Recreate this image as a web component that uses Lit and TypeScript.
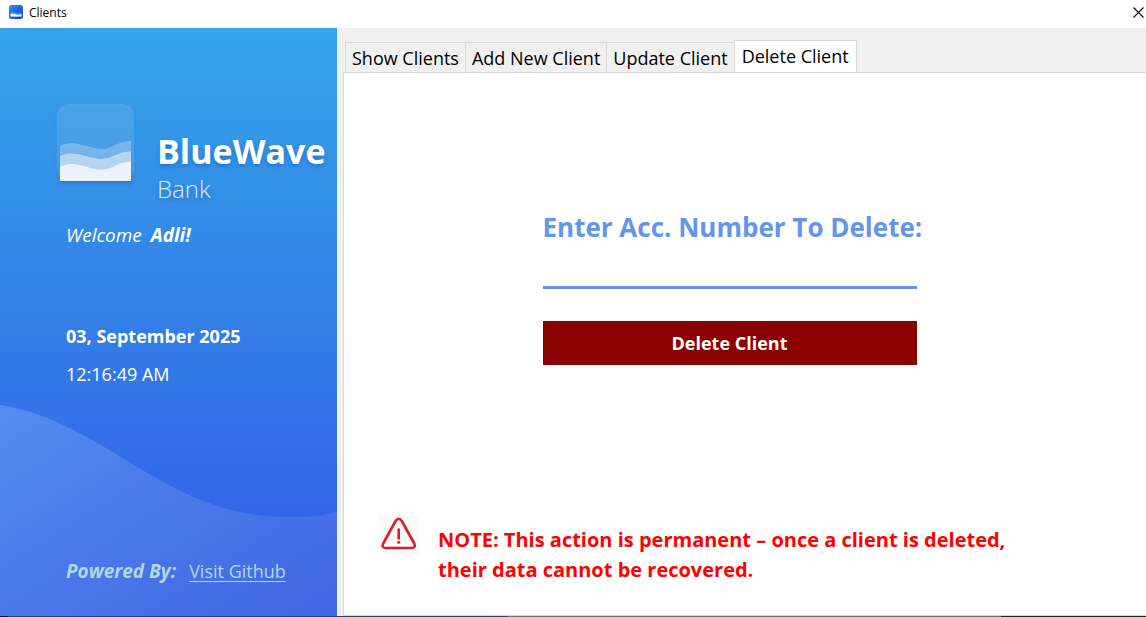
import { LitElement, html, css, svg } from "lit";
import { customElement, state } from "lit/decorators.js";

const waves = svg`
  <path d="M3 42.600 C7 39.500 11 39 14.700 39 C25 39 34 45 44.700 45 C55 45 61 37 74 37 V77 H3Z" fill="#fff" fill-opacity=".27"/>
  <path d="M3 52.300 C7 50 11 49.600 14.700 49.600 C25 49.600 34 55 44.700 55 C55 55 61 47.600 74 47.600 V77 H3Z" fill="#fff" fill-opacity=".48"/>
  <path d="M3 63 C7 60.500 11 60 14.700 60 C25 60 34 65.700 44.700 65.700 C55 65.700 61 57.800 74 57.800 V77 H3Z" fill="#ebf2fc"/>`;

@customElement("app-root")
export class AppRoot extends LitElement {
  @state() private tabs = ["Show Clients", "Add New Client", "Update Client", "Delete Client"];
  @state() private active = 3;

  static styles = css`
    :host {
      display: flex;
      flex-direction: column;
      min-height: 100vh;
      font-family: "Open Sans", "Noto Sans", sans-serif;
      color: #000;
      background: #fff;
    }
    * { box-sizing: border-box; }
    h1, h2, p { margin: 0; }
    .titlebar {
      display: flex;
      align-items: center;
      height: 28px;
      padding: 0 2px 4px 8px;
    }
    .app-icon { width: 16px; height: 16px; margin-right: 5px; }
    .title { font-size: 12px; line-height: 18px; padding-top: 2px; flex: 1; }
    .close {
      display: flex;
      padding: 0;
      border: 0;
      background: none;
    }
    .body { flex: 1; display: flex; }
    .sidebar {
      width: 337px;
      flex: none;
      display: grid;
      background: linear-gradient(#33a5e9, #3366e7 82%, #3366e7);
    }
    .wave {
      grid-area: 1 / 1;
      align-self: end;
      width: 100%;
      height: 211px;
      display: block;
    }
    .side-content {
      grid-area: 1 / 1;
      display: flex;
      flex-direction: column;
      padding: 76px 0 31px 57px;
      color: #fff;
      font-size: 18px;
      line-height: 28px;
    }
    .brand { display: flex; gap: 23px; }
    .logo { filter: drop-shadow(0 2px 2px rgba(0, 40, 120, 0.3)); flex: none; }
    .brand-text { padding-top: 25px; text-shadow: 0 2px 4px rgba(0, 40, 120, 0.3); }
    .brand-name { font-size: 34px; line-height: 44px; font-weight: 700; }
    .brand-sub { font-size: 24px; line-height: 32px; font-weight: 300; color: #dcebfb; }
    .info { display: flex; flex-direction: column; padding-left: 9px; }
    .welcome { font-style: italic; font-size: 19px; padding-top: 16px; }
    .welcome b { margin-left: 4px; }
    .date { font-weight: 700; padding-top: 73px; }
    .time { padding-top: 10px; }
    .powered {
      display: flex;
      gap: 13px;
      margin-top: auto;
      padding-left: 9px;
      color: #add8e6;
    }
    .powered strong { font-size: 19px; font-style: italic; }
    .powered a {
      color: inherit;
      text-decoration: underline;
      text-decoration-thickness: 1px;
      text-underline-offset: 3px;
    }
    .main {
      flex: 1;
      min-width: 0;
      display: flex;
      flex-direction: column;
      background: #f0f0f0;
      padding: 12px 0 0 6px;
    }
    .tabs {
      display: flex;
      align-items: flex-end;
      padding-left: 2px;
      margin-bottom: -1px;
    }
    .tab {
      font: inherit;
      font-size: 18px;
      line-height: 30px;
      height: 31px;
      padding: 0 6px;
      border: 1px solid #d9d9d9;
      border-right: 0;
      background: #f0f0f0;
      color: #000;
      white-space: nowrap;
    }
    .tab.active {
      height: 33px;
      padding: 0 7px 2px;
      border-right: 1px solid #d9d9d9;
      border-bottom-color: #fff;
      background: #fff;
    }
    .panel {
      flex: 1;
      display: flex;
      flex-direction: column;
      background: #fff;
      border: 1px solid #d9d9d9;
      border-right: 0;
      padding: 134px 66px 30px 35px;
    }
    .form {
      width: 374px;
      align-self: center;
      display: flex;
      flex-direction: column;
    }
    .form label {
      color: #6495ed;
      font-size: 26px;
      font-weight: 700;
      line-height: 40px;
      white-space: nowrap;
    }
    .form input {
      font: inherit;
      font-size: 20px;
      height: 42px;
      padding: 0;
      border: 0;
      border-bottom: 3px solid #6495ed;
      border-radius: 0;
      background: none;
      outline: 0;
    }
    .delete {
      font: inherit;
      font-size: 18px;
      font-weight: 700;
      height: 44px;
      margin-top: 32px;
      padding: 0;
      border: 0;
      background: #8b0000;
      color: #fff;
    }
    .note {
      display: flex;
      gap: 19px;
      margin-top: auto;
      color: #f00;
      font-size: 20px;
      font-weight: 700;
      line-height: 30px;
    }
    .warn { flex: none; }
    .note p { padding-top: 10px; }
    .edge {
      height: 1px;
      background: linear-gradient(90deg, #111 8px, #2f426b 8px 508px, #707070 508px 1001px, #222 1001px);
    }
  `;

  render() {
    return html`
      <header class="titlebar">
        <svg class="app-icon" viewBox="0 0 16 16" aria-hidden="true">
          <defs>
            <linearGradient id="ig" x1="0" y1="0" x2="1" y2="1">
              <stop offset="0" stop-color="#1e9af0" />
              <stop offset=".5" stop-color="#2264dc" />
              <stop offset="1" stop-color="#1c3fb4" />
            </linearGradient>
          </defs>
          <rect x="1" y="1" width="14" height="14" rx="2.500" fill="url(#ig)" />
          <path d="M2.500 8.500 Q5 8 8 9 T13.500 8.500 V12.500 H2.500Z" fill="#5c97ea" />
          <path d="M2.500 10 Q5 9.500 8 10.500 T13.500 10 V12.500 H2.500Z" fill="#e8f1fd" />
        </svg>
        <span class="title">Clients</span>
        <button class="close" aria-label="Close">
          <svg width="11" height="11" viewBox="0 0 11 11" stroke="#000" stroke-width="1.100">
            <path d="M.5 .5 L10.500 10.500 M10.500 .5 L.5 10.500" />
          </svg>
        </button>
      </header>
      <div class="body">
        <aside class="sidebar">
          <svg class="wave" viewBox="0 0 337 211" preserveAspectRatio="none" aria-hidden="true">
            <defs>
              <linearGradient id="wg" x1="0" y1="0" x2="1" y2="1">
                <stop offset="0" stop-color="#538dee" />
                <stop offset=".5" stop-color="#4a78ea" />
                <stop offset="1" stop-color="#4067e2" />
              </linearGradient>
            </defs>
            <path d="M0 0 C60 9 105 44 158 74 S250 112 287 112 S325 109 337 106 V211 H0Z" fill="url(#wg)" />
          </svg>
          <div class="side-content">
            <div class="brand">
              <svg class="logo" width="77" height="77" viewBox="0 0 77 77" aria-hidden="true">
                <rect width="77" height="77" rx="12" fill="#fff" fill-opacity=".12" />
                ${waves}
              </svg>
              <div class="brand-text">
                <h1 class="brand-name">BlueWave</h1>
                <p class="brand-sub">Bank</p>
              </div>
            </div>
            <div class="info">
              <p class="welcome">Welcome <b>Adli!</b></p>
              <p class="date">03, September 2025</p>
              <p class="time">12:16:49 AM</p>
            </div>
            <p class="powered"><strong>Powered By:</strong><a href="#">Visit Github</a></p>
          </div>
        </aside>
        <main class="main">
          <div class="tabs" role="tablist">
            ${this.tabs.map(
              (t, i) => html`<button
                class="tab ${i === this.active ? "active" : ""}"
                role="tab"
                aria-selected=${i === this.active}
                @click=${() => (this.active = i)}
              >${t}</button>`
            )}
          </div>
          <section class="panel" role="tabpanel">
            <form class="form" @submit=${(e: Event) => e.preventDefault()}>
              <label for="acc">Enter Acc. Number To Delete:</label>
              <input id="acc" type="text" autocomplete="off" />
              <button class="delete" type="submit">Delete Client</button>
            </form>
            <div class="note">
              <svg class="warn" width="40" height="40" viewBox="0 0 40 40" aria-hidden="true">
                <rect width="40" height="40" fill="#fafafa" />
                <path d="M16.600 6 Q19.700 1.500 22.800 6 L35.300 28.500 Q37 33 32.500 33 H7 Q2.300 33 4.200 28.500Z" fill="none" stroke="#d81e2a" stroke-width="2.600" stroke-linejoin="round" />
                <path d="M19.700 14.500 V23.500" stroke="#d81e2a" stroke-width="2.600" stroke-linecap="round" />
                <circle cx="19.700" cy="27.200" r="1.500" fill="#d81e2a" />
              </svg>
              <p>NOTE: This action is permanent – once a client is deleted,<br />their data cannot be recovered.</p>
            </div>
          </section>
        </main>
      </div>
      <div class="edge"></div>
    `;
  }
}
